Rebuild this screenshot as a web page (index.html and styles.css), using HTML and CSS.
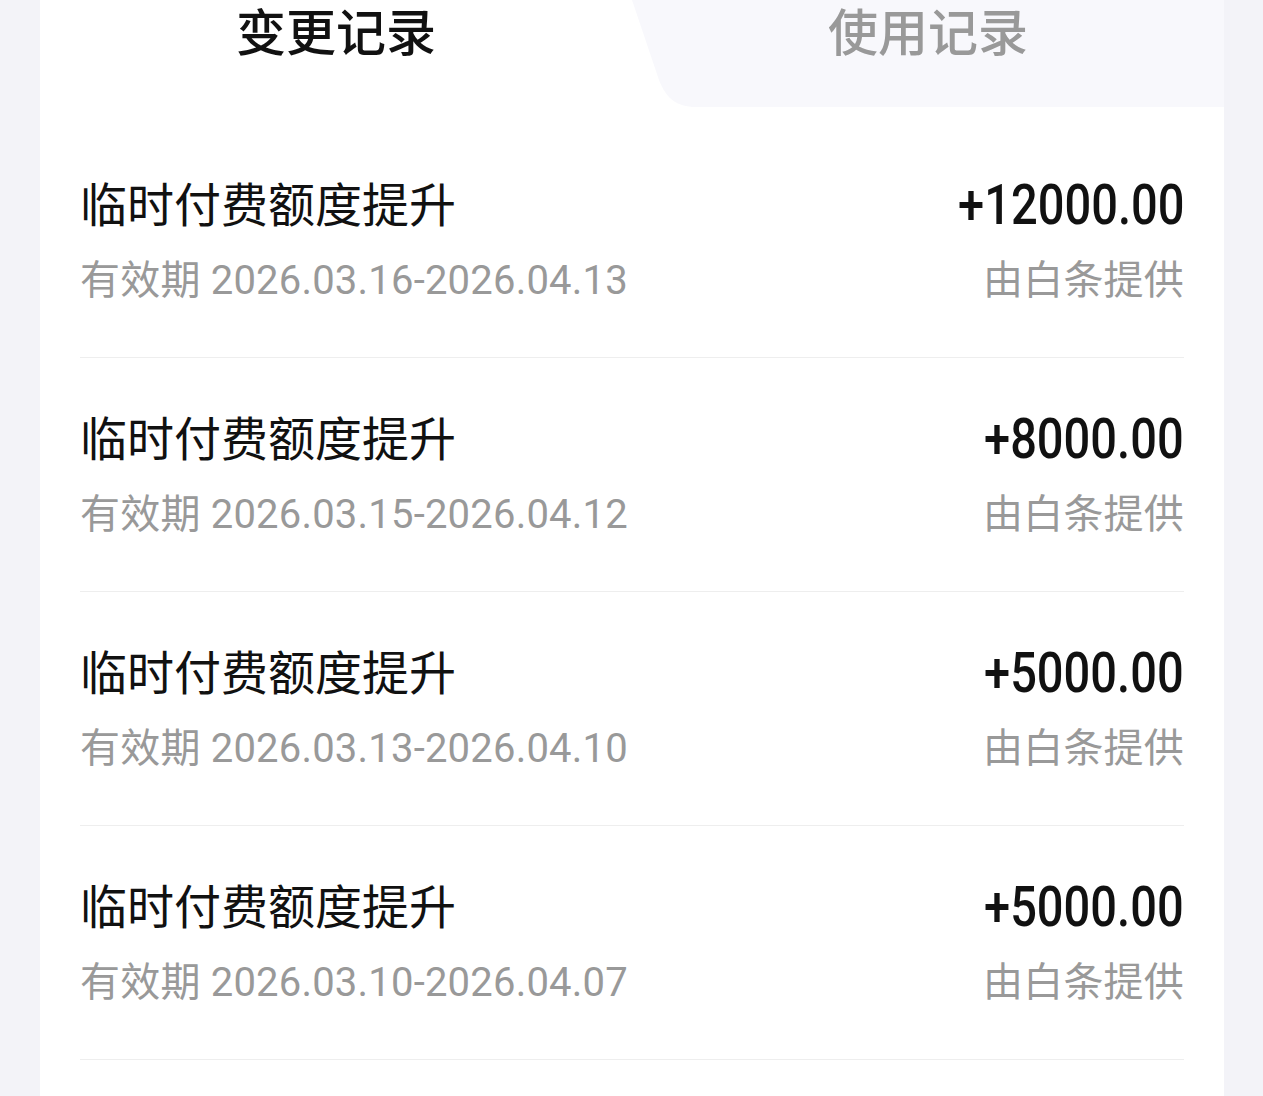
FILE: index.html
```html
<!DOCTYPE html>
<html lang="zh-CN">
<head>
    <meta charset="UTF-8">
    <meta name="viewport" content="width=device-width, initial-scale=1.0">
    <title>额度记录</title>
    <link rel="stylesheet" href="styles.css">
</head>
<body>
    <div class="card">
        <div class="tabs">
            <div class="tab tab-active">变更记录</div>
            <div class="tab tab-idle">使用记录</div>
        </div>

        <ul class="records">
            <li class="record">
                <div class="col">
                    <div class="record-title">临时付费额度提升</div>
                    <div class="record-sub">有效期 2026.03.16-2026.04.13</div>
                </div>
                <div class="col col-right">
                    <div class="amount"><span>+12000.00</span></div>
                    <div class="record-sub">由白条提供</div>
                </div>
            </li>
            <li class="record">
                <div class="col">
                    <div class="record-title">临时付费额度提升</div>
                    <div class="record-sub">有效期 2026.03.15-2026.04.12</div>
                </div>
                <div class="col col-right">
                    <div class="amount"><span>+8000.00</span></div>
                    <div class="record-sub">由白条提供</div>
                </div>
            </li>
            <li class="record">
                <div class="col">
                    <div class="record-title">临时付费额度提升</div>
                    <div class="record-sub">有效期 2026.03.13-2026.04.10</div>
                </div>
                <div class="col col-right">
                    <div class="amount"><span>+5000.00</span></div>
                    <div class="record-sub">由白条提供</div>
                </div>
            </li>
            <li class="record">
                <div class="col">
                    <div class="record-title">临时付费额度提升</div>
                    <div class="record-sub">有效期 2026.03.10-2026.04.07</div>
                </div>
                <div class="col col-right">
                    <div class="amount"><span>+5000.00</span></div>
                    <div class="record-sub">由白条提供</div>
                </div>
            </li>
        </ul>
    </div>
</body>
</html>
```

FILE: styles.css
```css
body {
    margin: 0;
    background-color: #f3f3f8;
    font-family: Roboto, "Noto Sans CJK SC", sans-serif;
    color: #111;
}
.card {
    background: white;
    margin: 0 39px 0 40px;
    min-height: 1096px;
}
.tabs {
    display: flex;
    height: 107px;
}
.tab {
    flex: 1;
    padding-top: 2px;
    text-align: center;
    font-family: "Noto Sans CJK SC", sans-serif;
    font-size: 50px;
    font-weight: 500;
    line-height: 54px;
}
.tab-active {
    color: #111;
}
.tab-idle {
    color: #999;
    background: #f8f8fc;
    clip-path: path("M0,0 L592,0 L592,107 L64,107 C44,107 34,98 27,80 Z");
}
.records {
    list-style: none;
    margin: 0;
    padding: 17px 40px 0;
}
.record {
    display: flex;
    justify-content: space-between;
    padding: 48px 0 48px;
    border-bottom: 1px solid #eeeeee;
}
.col {
    display: flex;
    flex-direction: column;
}
.col-right {
    align-items: flex-end;
}
.record-title {
    font-family: "Noto Sans CJK SC", sans-serif;
    font-size: 47px;
    font-weight: 400;
    line-height: 60px;
    color: #111;
}
.record-sub {
    margin-top: 21px;
    font-size: 40px;
    letter-spacing: 0.2px;
    line-height: 56px;
    color: #999;
}
.amount {
    font-size: 56px;
    font-weight: 500;
    line-height: 60px;
    color: #111;
}
.amount span {
    display: inline-block;
    transform: translateY(3px) scaleX(0.84);
    transform-origin: right center;
}
```
